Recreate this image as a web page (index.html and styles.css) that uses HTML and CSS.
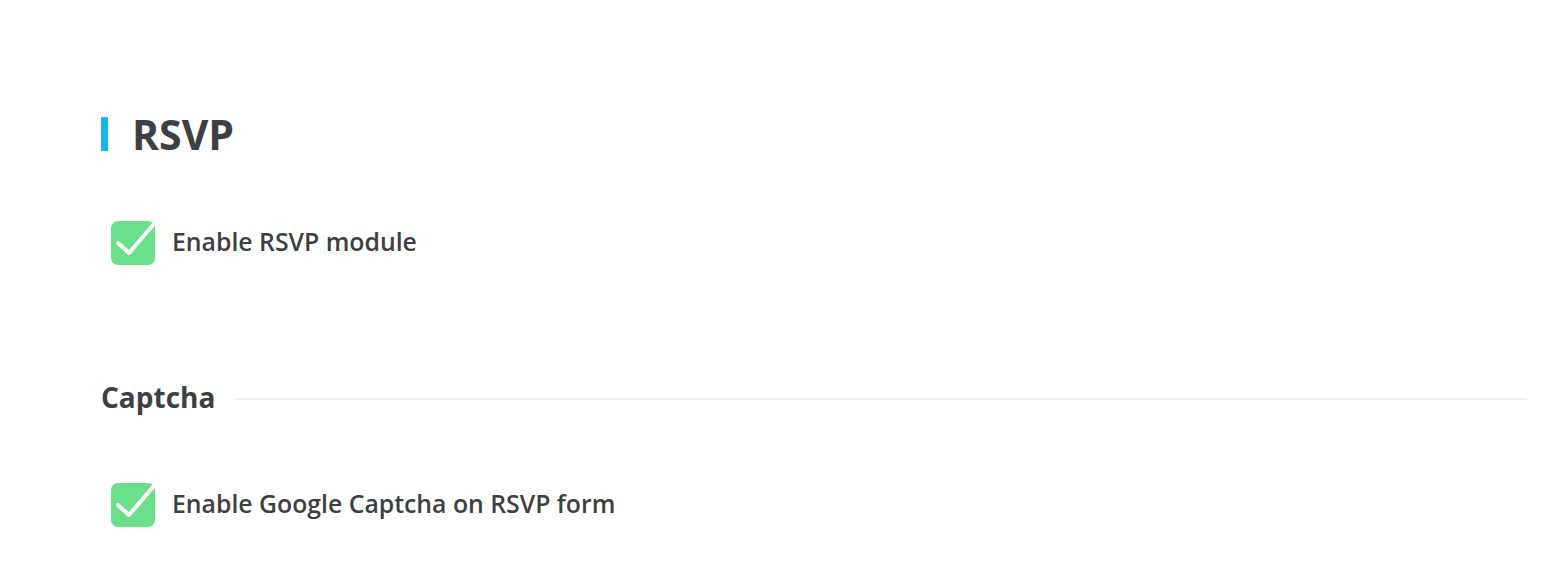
FILE: index.html
```html
<!DOCTYPE html>
<html>
<head>
<meta charset="utf-8">
<link rel="stylesheet" href="styles.css">
</head>
<body>
<main class="page">
  <h1 class="title"><span class="title-bar"></span>RSVP</h1>
  <label class="check-row">
    <span class="checkbox"><svg viewBox="0 0 44 44" width="44" height="44"><path d="M7 22 L18 32 L42 4" fill="none" stroke="#fff" stroke-width="4" stroke-linecap="round" stroke-linejoin="round"/></svg></span>
    <span class="check-label">Enable RSVP module</span>
  </label>
  <div class="section-head">
    <h2 class="section-title">Captcha</h2>
    <span class="section-line"></span>
  </div>
  <label class="check-row">
    <span class="checkbox"><svg viewBox="0 0 44 44" width="44" height="44"><path d="M7 22 L18 32 L42 4" fill="none" stroke="#fff" stroke-width="4" stroke-linecap="round" stroke-linejoin="round"/></svg></span>
    <span class="check-label">Enable Google Captcha on RSVP form</span>
  </label>
</main>
</body>
</html>
```
FILE: styles.css
```css
html, body {
  margin: 0;
  padding: 0;
  background: #fff;
}
body {
  font-family: "Open Sans", "Noto Sans", sans-serif;
  color: #3c3f44;
}
.page {
  padding: 104px 38px 0 101px;
}
.title {
  display: flex;
  align-items: center;
  margin: 0;
  font-size: 41px;
  font-weight: 700;
  line-height: 60px;
}
.title-bar {
  width: 7px;
  height: 34px;
  background: #14b7e6;
  margin-right: 24px;
}
.check-row {
  display: flex;
  align-items: center;
  margin-left: 10px;
  margin-top: 57px;
  height: 44px;
}
.checkbox {
  position: relative;
  width: 44px;
  height: 44px;
  border-radius: 7px;
  background: #69e089;
  flex: none;
}
.checkbox svg {
  position: absolute;
  left: 0;
  top: 0;
  overflow: visible;
}
.check-label {
  margin-left: 17px;
  padding-bottom: 4px;
  font-size: 24.8px;
  font-weight: 600;
}
.section-head {
  display: flex;
  align-items: center;
  margin-top: 112px;
}
.section-title {
  margin: 0;
  font-size: 28px;
  font-weight: 700;
  line-height: 40px;
}
.section-line {
  flex: 1;
  height: 2px;
  background: #f0f0f0;
  margin-left: 20px;
  margin-top: 3px;
}
.section-head + .check-row {
  margin-top: 66px;
}
```
